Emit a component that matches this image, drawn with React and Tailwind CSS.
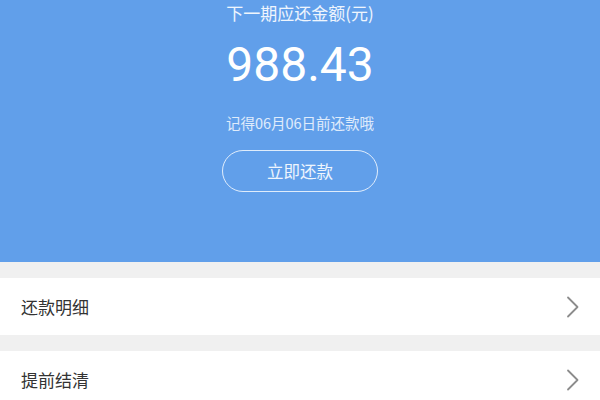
import React from "react";

const font = { fontFamily: '"Noto Sans CJK SC", "Noto Sans", Roboto, sans-serif' };

function Chevron() {
  return (
    <svg width="14" height="22" viewBox="0 0 14 22" fill="none">
      <path d="M2 1.5 L11.5 11 L2 20.5" stroke="#8c8c8c" strokeWidth="1.8" strokeLinecap="round" strokeLinejoin="round" />
    </svg>
  );
}

function Row({ label }) {
  return (
    <div className="flex h-[57px] items-center justify-between bg-white pl-[21px] pr-[20px]">
      <span className="text-[17px] text-[#333333]">{label}</span>
      <Chevron />
    </div>
  );
}

export default function App() {
  return (
    <div className="h-[400px] w-[600px] overflow-hidden bg-[#f0f0f0]" style={font}>
      <div className="flex h-[262px] flex-col items-center bg-[#619fea] text-white">
        <div className="mt-[1px] text-[17px] leading-[24px] text-white/90">下一期应还金额(元)</div>
        <div className="mt-[12px] text-[48px] leading-[56px]" style={{ fontFamily: 'Roboto, "Noto Sans", sans-serif' }}>988.43</div>
        <div className="mt-[20px] text-[14.5px] leading-[20px] text-white/80">记得06月06日前还款哦</div>
        <button className="mt-[17px] flex h-[42px] w-[156px] items-center justify-center rounded-full border-[1.5px] border-white/80 text-[16.5px] text-white/90">
          立即还款
        </button>
      </div>
      <div className="mt-[16px]">
        <Row label="还款明细" />
      </div>
      <div className="mt-[16px]">
        <Row label="提前结清" />
      </div>
    </div>
  );
}
